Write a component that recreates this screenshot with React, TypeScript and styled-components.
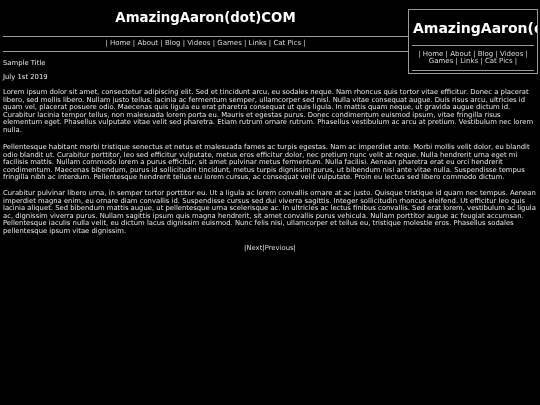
import React from "react";
import styled, { createGlobalStyle } from "styled-components";

const Global = createGlobalStyle`
  html, body { margin: 0; padding: 0; background: #000; }
  body {
    color: #e6e6e6;
    font-family: "DejaVu Sans", Verdana, sans-serif;
    font-size: 7px;
    -webkit-font-smoothing: antialiased;
  }
`;

const Page = styled.div`
  padding: 0 3px;
  will-change: transform;
`;

const Header = styled.header`
  width: 405px;
  text-align: center;
`;

const SiteTitle = styled.h1`
  margin: 9.5px 0 0;
  font-size: 13.3px;
  line-height: 15px;
  font-weight: bold;
  color: #fff;
  white-space: nowrap;
`;

const Rule = styled.div<{ $top: number; $bottom: number }>`
  height: 0;
  border-top: 1px solid #9a9a9a;
  margin: ${(p) => p.$top}px 0 ${(p) => p.$bottom}px;
`;

const Nav = styled.nav`
  color: #dcdcdc;
  line-height: 7.8px;
`;

const NavLink = styled.a`
  color: #dcdcdc;
  text-decoration: none;
`;

const Meta = styled.p<{ $top: number }>`
  margin: ${(p) => p.$top}px 0 0;
  font-size: 6.85px;
  line-height: 7.6px;
`;

const Para = styled.p<{ $top: number }>`
  margin: ${(p) => p.$top}px 0 0;
  font-size: 6.84px;
  line-height: 7.5px;
`;

const Pager = styled.div`
  margin-top: 10px;
  font-size: 6.85px;
  text-align: center;
  line-height: 7.6px;
`;

const FloatBox = styled.div`
  position: fixed;
  top: 9px;
  left: 408px;
  width: 130px;
  height: 65px;
  box-sizing: border-box;
  border: 1px solid #9a9a9a;
  overflow: hidden;
  padding: 0 3px;
  text-align: center;
  will-change: transform;
`;

const BoxTitle = styled.div`
  margin-top: 10.5px;
  font-size: 14px;
  line-height: 15px;
  font-weight: bold;
  color: #fff;
  white-space: nowrap;
  text-align: left;
  padding-left: 1px;
`;

const links = ["Home", "About", "Blog", "Videos", "Games", "Links", "Cat Pics"];

const NavItems = () => (
  <>
    |{" "}
    {links.map((l) => (
      <React.Fragment key={l}>
        <NavLink href="#">{l}</NavLink>
        {" | "}
      </React.Fragment>
    ))}
  </>
);

export default function App() {
  return (
    <>
      <Global />
      <Page>
        <Header>
          <SiteTitle>AmazingAaron(dot)COM</SiteTitle>
          <Rule $top={11} $bottom={3} />
          <Nav>
            <NavItems />
          </Nav>
          <Rule $top={3} $bottom={0} />
        </Header>
        <Meta $top={8.5}>Sample Title</Meta>
        <Meta $top={6.5}>July 1st 2019</Meta>
        <Para $top={7.5}>
          Lorem ipsum dolor sit amet, consectetur adipiscing elit. Sed et tincidunt arcu, eu sodales neque. Nam rhoncus quis tortor vitae efficitur. Donec a placerat libero, sed mollis libero. Nullam justo tellus, lacinia ac fermentum semper, ullamcorper sed nisl. Nulla vitae consequat augue. Duis risus arcu, ultricies id quam vel, placerat posuere odio. Maecenas quis ligula eu erat pharetra consequat ut quis ligula. In mattis quam neque, ut gravida augue dictum id. Curabitur lacinia tempor tellus, non malesuada lorem porta eu. Mauris et egestas purus. Donec condimentum euismod ipsum, vitae fringilla risus elementum eget. Phasellus vulputate vitae velit sed pharetra. Etiam rutrum ornare rutrum. Phasellus vestibulum ac arcu at pretium. Vestibulum nec lorem nulla.
        </Para>
        <Para $top={10}>
          Pellentesque habitant morbi tristique senectus et netus et malesuada fames ac turpis egestas. Nam ac imperdiet ante. Morbi mollis velit dolor, eu blandit odio blandit ut. Curabitur porttitor, leo sed efficitur vulputate, metus eros efficitur dolor, nec pretium nunc velit at neque. Nulla hendrerit urna eget mi facilisis mattis. Nullam commodo lorem a purus efficitur, sit amet pulvinar metus fermentum. Nulla facilisi. Aenean pharetra erat eu orci hendrerit condimentum. Maecenas bibendum, purus id sollicitudin tincidunt, metus turpis dignissim purus, ut bibendum nisi ante vitae nulla. Suspendisse tempus fringilla nibh ac interdum. Pellentesque hendrerit tellus eu lorem cursus, ac consequat velit vulputate. Proin eu lectus sed libero commodo dictum.
        </Para>
        <Para $top={8.5}>
          Curabitur pulvinar libero urna, in semper tortor porttitor eu. Ut a ligula ac lorem convallis ornare at ac justo. Quisque tristique id quam nec tempus. Aenean imperdiet magna enim, eu ornare diam convallis id. Suspendisse cursus sed dui viverra sagittis. Integer sollicitudin rhoncus eleifend. Ut efficitur leo quis lacinia aliquet. Sed bibendum mattis augue, ut pellentesque urna scelerisque ac. In ultricies ac lectus finibus convallis. Sed erat lorem, vestibulum ac ligula ac, dignissim viverra purus. Nullam sagittis ipsum quis magna hendrerit, sit amet convallis purus vehicula. Nullam porttitor augue ac feugiat accumsan. Pellentesque iaculis nulla velit, eu dictum lacus dignissim euismod. Nunc felis nisi, ullamcorper et tellus eu, tristique molestie eros. Phasellus sodales pellentesque ipsum vitae dignissim.
        </Para>
        <Pager>
          |<NavLink href="#">Next</NavLink>|<NavLink href="#">Previous</NavLink>|
        </Pager>
      </Page>
      <FloatBox>
        <BoxTitle>AmazingAaron(dot)COM</BoxTitle>
        <Rule $top={9.5} $bottom={4.5} />
        <Nav>
          <NavItems />
        </Nav>
        <Rule $top={4} $bottom={0} />
      </FloatBox>
    </>
  );
}
